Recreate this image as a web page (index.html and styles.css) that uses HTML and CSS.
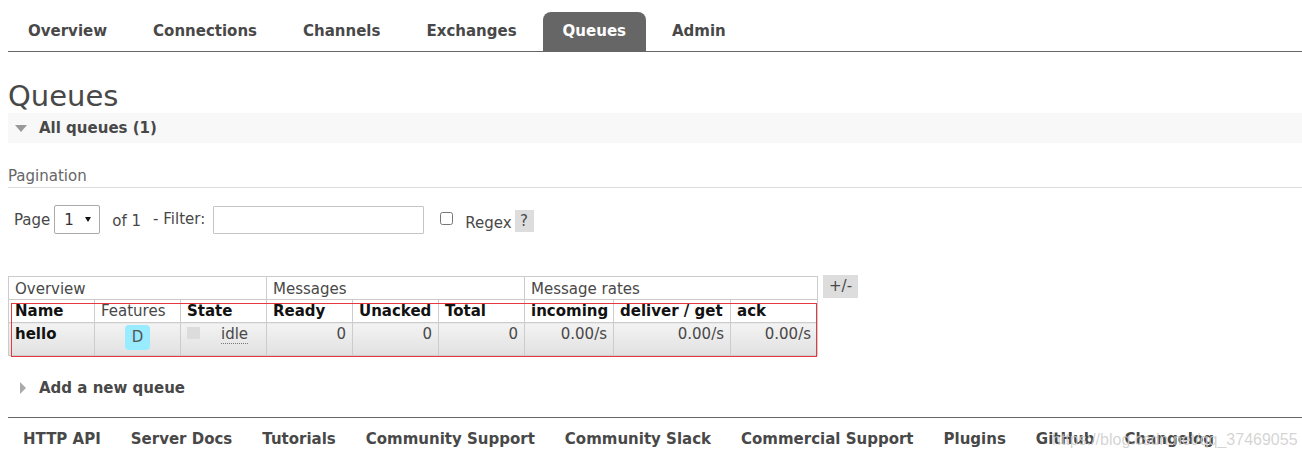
FILE: index.html
```html
<!DOCTYPE html>
<html lang="en">
<head>
    <meta charset="UTF-8">
    <title>RabbitMQ Management - Queues</title>
    <link rel="stylesheet" href="styles.css">
</head>
<body>
    <div class="page">
        <ul class="tabs">
            <li><a href="#">Overview</a></li>
            <li><a href="#">Connections</a></li>
            <li><a href="#">Channels</a></li>
            <li><a href="#">Exchanges</a></li>
            <li class="active"><a href="#">Queues</a></li>
            <li><a href="#">Admin</a></li>
        </ul>

        <h1>Queues</h1>

        <div class="section-h open"><span class="arrow"></span>All queues (1)</div>

        <h3 class="subhead">Pagination</h3>
        <div class="pager">
            <label class="lbl-page">Page</label>
            <span class="select-wrap">
                <select class="page-select">
                    <option>1</option>
                </select>
            </span>
            <span class="of">of 1</span>
            <label class="lbl-filter">- Filter:</label>
            <input type="text" class="filter">
            <input type="checkbox" class="regex-check">
            <label class="lbl-regex">Regex</label>
            <span class="help">?</span>
        </div>

        <div class="list-wrap">
            <div class="table-box">
                <table class="list">
                    <colgroup>
                        <col class="w86"><col class="w86"><col class="w86">
                        <col class="w86"><col class="w86"><col class="w86">
                        <col class="w89"><col class="w117"><col class="w87">
                    </colgroup>
                    <thead>
                        <tr class="groups">
                            <th colspan="3">Overview</th>
                            <th colspan="3">Messages</th>
                            <th colspan="3">Message rates</th>
                        </tr>
                        <tr class="cols">
                            <th class="sort">Name</th>
                            <th>Features</th>
                            <th class="sort">State</th>
                            <th class="sort">Ready</th>
                            <th class="sort">Unacked</th>
                            <th class="sort">Total</th>
                            <th class="sort">incoming</th>
                            <th class="sort">deliver / get</th>
                            <th class="sort">ack</th>
                        </tr>
                    </thead>
                    <tbody>
                        <tr class="data">
                            <td class="name">hello</td>
                            <td class="c"><abbr class="feature" title="durable: true">D</abbr></td>
                            <td><span class="state-box"></span><abbr class="state" title="Idle since 2019">idle</abbr></td>
                            <td class="r">0</td>
                            <td class="r">0</td>
                            <td class="r">0</td>
                            <td class="r">0.00/s</td>
                            <td class="r">0.00/s</td>
                            <td class="r">0.00/s</td>
                        </tr>
                    </tbody>
                </table>
                <div class="mark"></div>
            </div>
            <span class="toggle">+/-</span>
        </div>

        <div class="section-h closed"><span class="arrow"></span>Add a new queue</div>

        <div class="footer">
            <a href="#">HTTP API</a>
            <a href="#">Server Docs</a>
            <a href="#">Tutorials</a>
            <a href="#">Community Support</a>
            <a href="#">Community Slack</a>
            <a href="#">Commercial Support</a>
            <a href="#">Plugins</a>
            <a href="#">GitHub</a>
            <a href="#">Changelog</a>
            <span class="watermark">https://blog.csdn.net/qq_37469055</span>
        </div>
    </div>
</body>
</html>
```

FILE: styles.css
```css
* {
    margin: 0;
    padding: 0;
    box-sizing: border-box;
}

body {
    font-family: "DejaVu Sans", Verdana, sans-serif;
    font-size: 15px;
    line-height: 18px;
    color: #484848;
    background: #fff;
}

a {
    color: #484848;
    text-decoration: none;
}

.page {
    padding-left: 8px;
}

/* top tabs */
.tabs {
    list-style: none;
    display: flex;
    gap: 6px;
    padding-top: 12px;
    border-bottom: 1px solid #666;
}

.tabs a {
    display: block;
    padding: 0 20px;
    line-height: 39px;
    font-weight: bold;
    border-radius: 8px 8px 0 0;
}

.tabs .active a {
    background: #666;
    color: #fff;
}

h1 {
    font-size: 29px;
    line-height: 29px;
    font-weight: normal;
    color: #484848;
    margin: 30px 0 2px;
}

/* collapsible section headers */
.section-h {
    display: flex;
    align-items: center;
    height: 30px;
    font-weight: bold;
}

.section-h.open {
    background: #f8f8f8;
    padding-left: 7px;
}

.section-h.open .arrow {
    width: 0;
    height: 0;
    border-left: 6px solid transparent;
    border-right: 6px solid transparent;
    border-top: 7px solid #999;
    margin-right: 12px;
}

.section-h.closed {
    margin-top: 17px;
    padding-left: 12px;
}

.section-h.closed .arrow {
    width: 0;
    height: 0;
    border-top: 6px solid transparent;
    border-bottom: 6px solid transparent;
    border-left: 6px solid #aaa;
    margin-right: 13px;
}

.subhead {
    font-size: 15px;
    font-weight: normal;
    color: #666;
    margin-top: 24px;
    padding-bottom: 2px;
    border-bottom: 1px solid #ddd;
}

/* pagination row */
.pager {
    display: flex;
    align-items: center;
    height: 29px;
    margin-top: 17px;
}

.lbl-page {
    margin: 0 4px 0 6px;
}

.select-wrap {
    position: relative;
    display: inline-block;
}

.select-wrap::after {
    content: "";
    position: absolute;
    left: 31px;
    top: 12px;
    border-left: 3px solid transparent;
    border-right: 3px solid transparent;
    border-top: 5px solid #111;
    pointer-events: none;
}

.page-select {
    appearance: none;
    -webkit-appearance: none;
    width: 46px;
    height: 29px;
    padding-left: 9px;
    border: 1px solid #aaa;
    border-radius: 2px;
    background: #fff;
    font-family: "DejaVu Sans", Verdana, sans-serif;
    font-size: 15px;
    color: #333;
}

.of {
    margin-left: 12px;
    position: relative;
    top: 1px;
}

.lbl-filter {
    margin-left: 12px;
    position: relative;
    top: -1px;
}

.filter {
    width: 211px;
    height: 28px;
    margin-left: 8px;
    border: 1px solid #c4c4c4;
    border-radius: 1px;
}

.regex-check {
    width: 13px;
    height: 13px;
    margin-left: 16px;
    position: relative;
    top: -1px;
}

.lbl-regex {
    margin-left: 12px;
    position: relative;
    top: 3px;
}

.help {
    display: inline-block;
    width: 19px;
    height: 22px;
    line-height: 22px;
    margin-left: 3px;
    text-align: center;
    background: #ddd;
    position: relative;
    top: 1px;
}

/* queue table */
.list-wrap {
    display: flex;
    align-items: flex-start;
    margin-top: 42px;
}

.table-box {
    position: relative;
}

.list {
    width: 809px;
    table-layout: fixed;
    border-collapse: collapse;
}

.w86 { width: 86px; }
.w87 { width: 87px; }
.w89 { width: 89px; }
.w117 { width: 117px; }

.list th,
.list td {
    border: 1px solid #ccc;
    padding: 2px 6px;
    line-height: 18px;
    text-align: left;
    white-space: nowrap;
}

.list th {
    font-weight: normal;
    background: #fff;
}

.list .groups th {
    padding-top: 3px;
    padding-bottom: 1px;
}

.list th.sort {
    font-weight: bold;
    color: #111;
}

.list .cols th {
    border-top-color: #ddd;
}

.list tr.data {
    height: 33px;
}

.list td {
    vertical-align: top;
    background: linear-gradient(#f3f3f3, #e1e1e1);
}

.list td.name {
    font-weight: bold;
    color: #111;
}

.list td.c {
    text-align: center;
}

.list td.r {
    text-align: right;
}

.feature {
    display: inline-block;
    width: 25px;
    height: 25px;
    line-height: 25px;
    vertical-align: top;
    text-align: center;
    background: #99ebff;
    border-radius: 4px;
    color: #555;
    text-decoration: none;
}

.state-box {
    display: inline-block;
    width: 13px;
    height: 12px;
    background: #dcdcdc;
    margin-right: 21px;
}

.state {
    text-decoration: none;
    border-bottom: 1px dotted #777;
}

/* red annotation frame drawn over the screenshot */
.mark {
    position: absolute;
    left: 3px;
    top: 27px;
    width: 806px;
    height: 54px;
    border: 1px solid #e8383d;
    pointer-events: none;
}

.toggle {
    display: inline-block;
    margin: -1px 0 0 5px;
    padding: 0 6px;
    line-height: 23px;
    background: #ddd;
}

/* footer links */
.footer {
    position: relative;
    display: flex;
    gap: 30px;
    margin-top: 14px;
    padding: 12px 0 0 15px;
    border-top: 1px solid #666;
}

.footer a {
    font-weight: bold;
}

.watermark {
    position: absolute;
    left: 1044px;
    top: 13px;
    font-family: "Liberation Sans", Arial, sans-serif;
    font-size: 16px;
    color: rgba(205, 205, 205, 0.85);
    white-space: nowrap;
}
```
